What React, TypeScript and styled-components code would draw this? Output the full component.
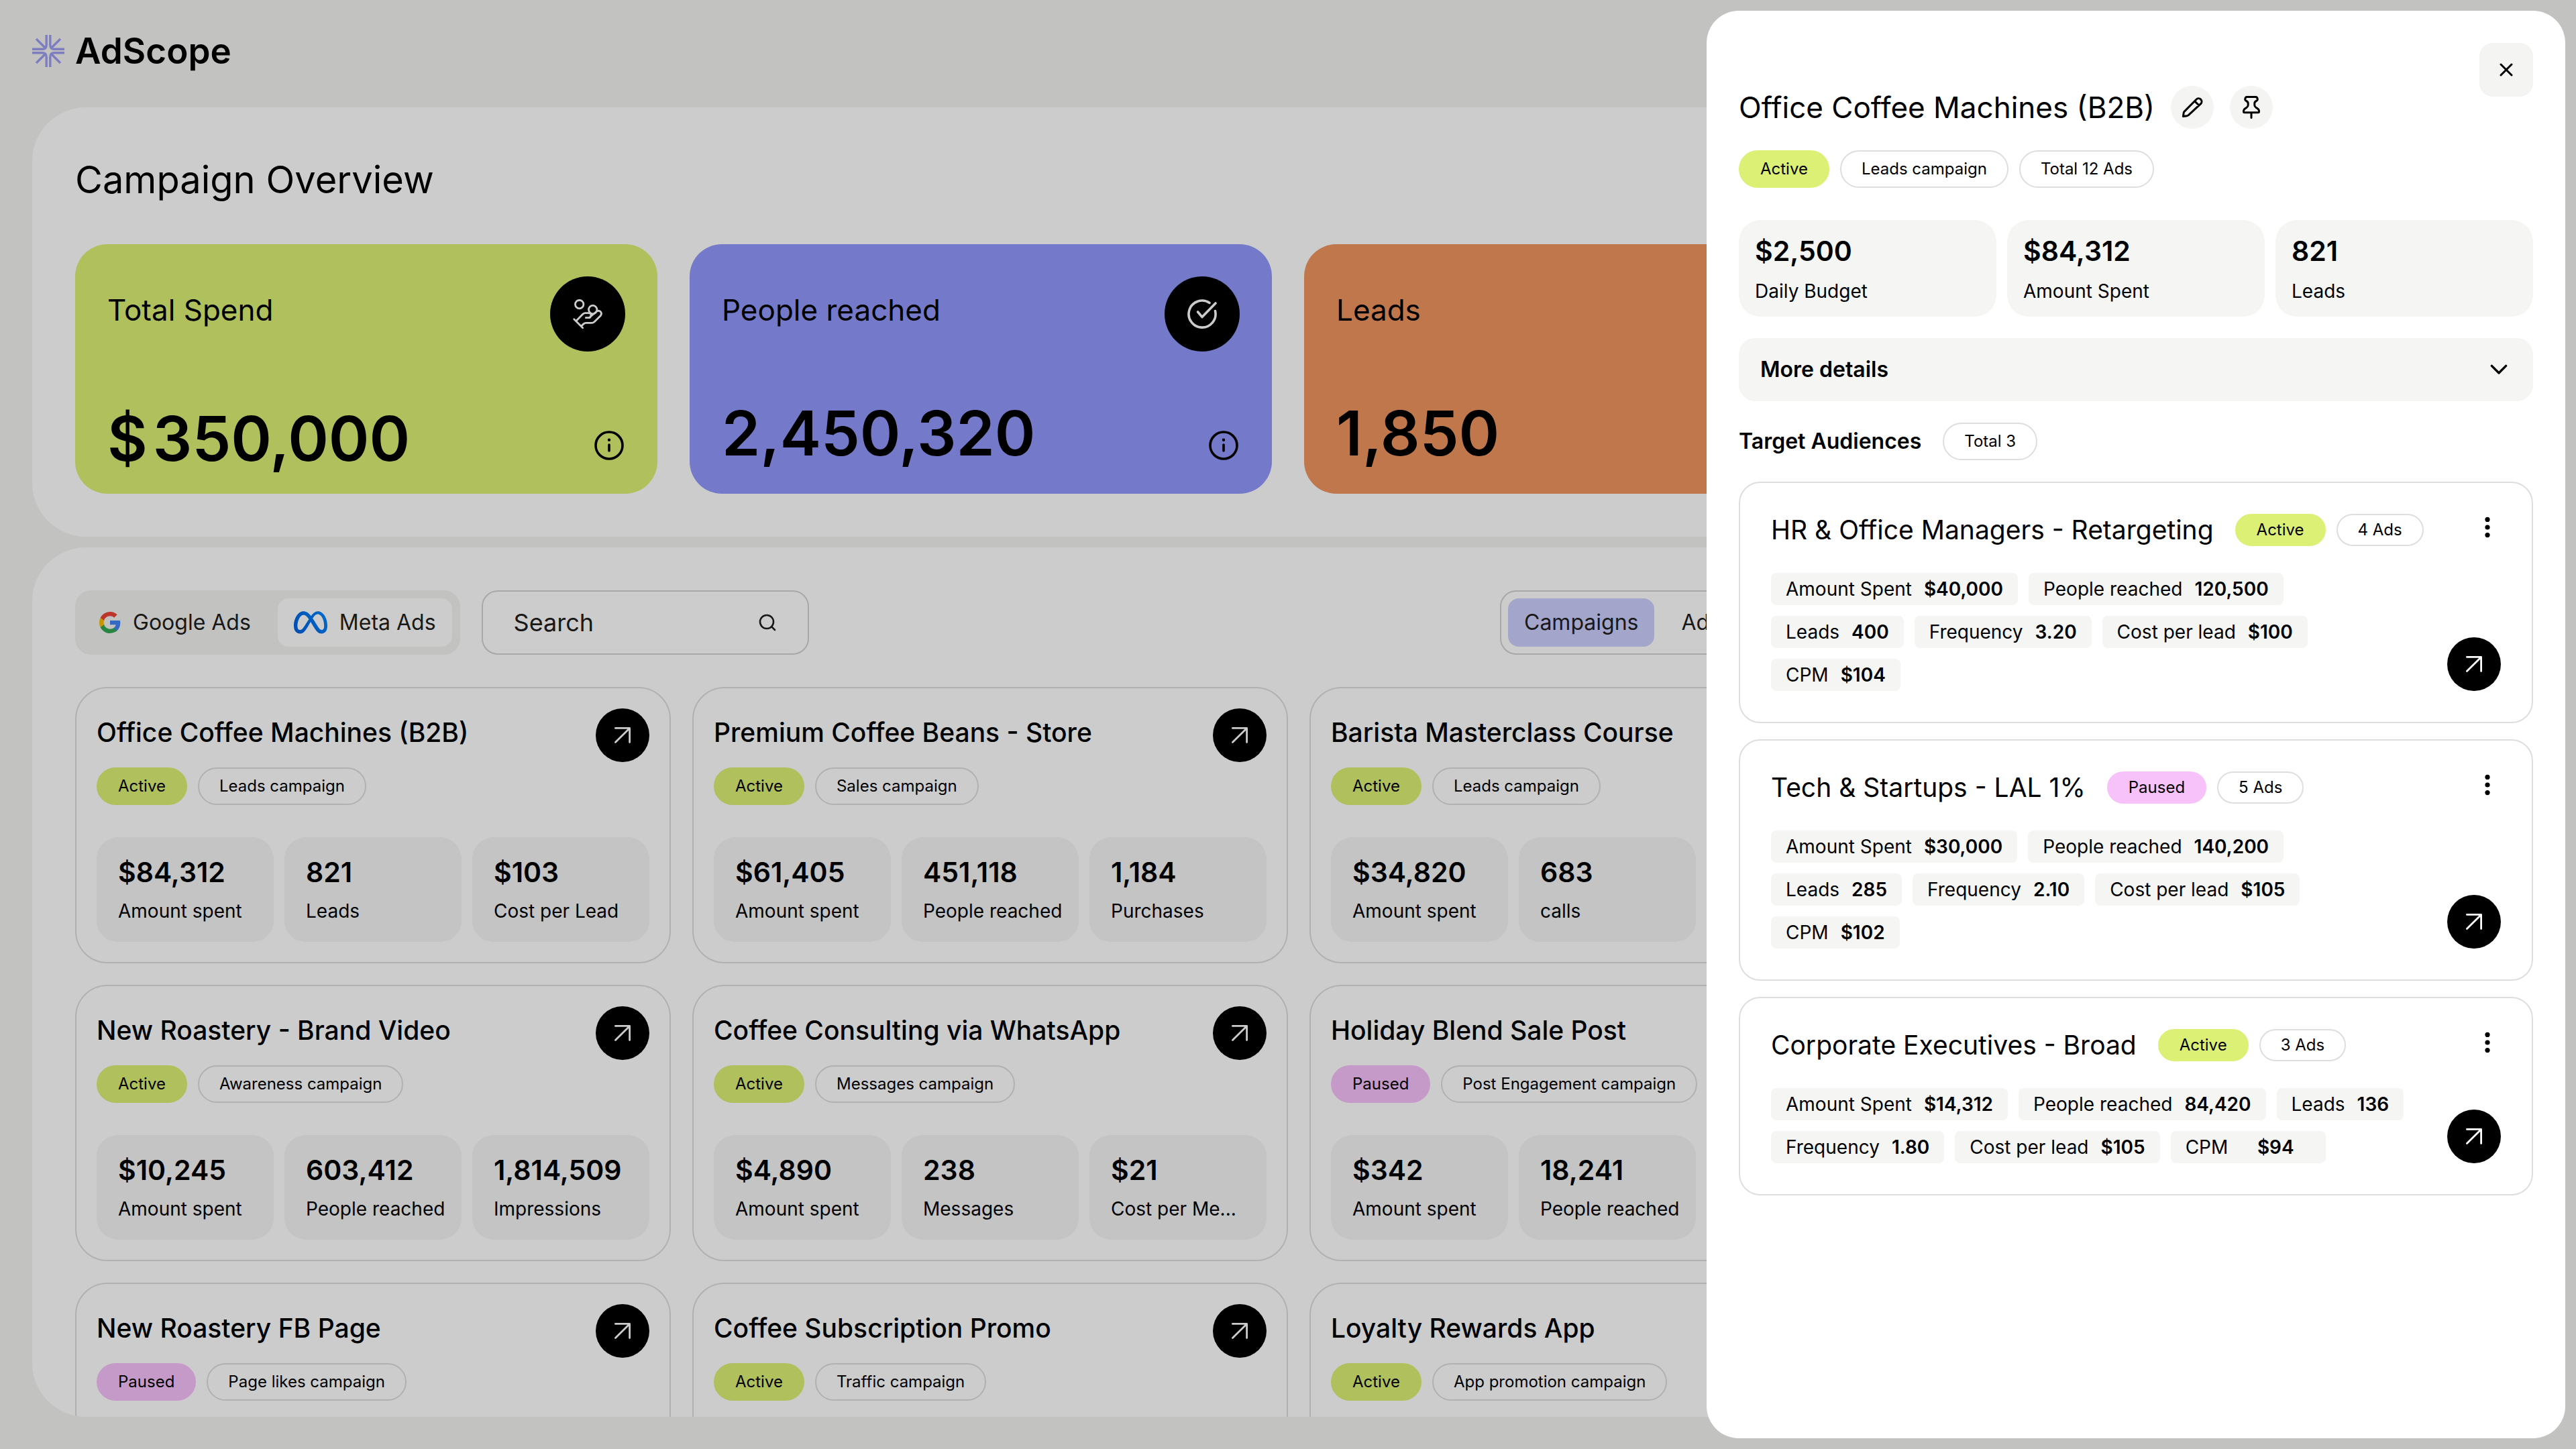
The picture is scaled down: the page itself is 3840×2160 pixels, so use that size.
import React from "react";
import styled, { createGlobalStyle } from "styled-components";
import { FaMeta } from "react-icons/fa6";
import { Users } from "lucide-react";

const GlobalStyle = createGlobalStyle`
  *, *::before, *::after { box-sizing: border-box; }
  body {
    margin: 0;
    overflow: hidden;
    background: #f3f3f0;
    color: #000;
    font-family: Inter, "Noto Sans", sans-serif;
    font-size: 28px;
    line-height: 36px;
  }
  h1, h2, h3, p, ul, dl, dt, dd { margin: 0; padding: 0; font-weight: 400; }
  ul { list-style: none; }
  button, input { font: inherit; color: inherit; }
  button { border: 0; padding: 0; cursor: pointer; }
  svg { display: block; flex: none; }
`;

/* ---------- dashboard ---------- */

const Page = styled.div`
  display: flex;
  flex-direction: column;
  gap: 16px;
  height: 100vh;
  padding: 0 48px 48px;
`;

const TopBar = styled.header`
  display: flex;
  align-items: center;
  gap: 16px;
  padding: 44px 0 36px;
`;

const Brand = styled.span`
  font-size: 53px;
  line-height: 64px;
  font-weight: 600;
`;

const Overview = styled.section`
  flex: none;
  padding: 64px;
  border-radius: 80px;
  background: #fff;
`;

const PageTitle = styled.h1`
  margin-bottom: 52px;
  font-size: 56px;
  line-height: 88px;
`;

const OverviewGrid = styled.div`
  display: grid;
  grid-template-columns: repeat(4, 1fr);
  gap: 48px;
`;

const MetricCard = styled.article<{ $tone: string }>`
  display: flex;
  justify-content: space-between;
  height: 372px;
  padding: 48px;
  border-radius: 48px;
  background: ${(p) => p.$tone};
`;

const MetricColumn = styled.div`
  display: flex;
  flex-direction: column;
  justify-content: space-between;
  align-items: flex-start;
`;

const MetricSide = styled(MetricColumn)`
  align-items: flex-end;
`;

const MetricName = styled.h2`
  padding-top: 22px;
  font-size: 44px;
  line-height: 56px;
`;

const MetricValue = styled.p<{ $money?: boolean }>`
  display: flex;
  gap: 8px;
  font-size: 92px;
  line-height: ${(p) => (p.$money ? 68 : 84)}px;
  font-weight: 600;
`;

const MetricIcon = styled.span`
  display: grid;
  place-items: center;
  width: 112px;
  height: 112px;
  border-radius: 50%;
  background: #000;
  color: #fff;
`;

const BareButton = styled.button`
  background: none;
`;

const Workspace = styled.section`
  flex: 1;
  min-height: 0;
  overflow: hidden;
  padding: 64px 32px 0 64px;
  border-radius: 80px;
  background: #fff;
`;

const Toolbar = styled.div`
  display: grid;
  grid-template-columns: auto 488px 1fr 1524px;
  gap: 32px;
  margin-bottom: 48px;
`;

const Switcher = styled.div<{ $outlined?: boolean }>`
  grid-column: ${(p) => (p.$outlined ? 4 : "auto")};
  display: flex;
  gap: 16px;
  height: 96px;
  padding: ${(p) => (p.$outlined ? 10 : 12)}px;
  border: ${(p) => (p.$outlined ? "2px solid #d3d3d3" : "0")};
  border-radius: 24px;
  background: ${(p) => (p.$outlined ? "#fff" : "#f3f3f0")};
`;

const SwitchButton = styled.button<{ $fill?: string }>`
  display: flex;
  align-items: center;
  gap: 18px;
  padding: 0 24px;
  border-radius: 16px;
  background: ${(p) => p.$fill || "transparent"};
  color: #1f1f1f;
  font-size: 32px;
  white-space: nowrap;
`;

const SearchBox = styled.label`
  display: flex;
  align-items: center;
  height: 96px;
  padding: 0 46px;
  border: 2px solid #d3d3d3;
  border-radius: 24px;
`;

const SearchInput = styled.input`
  flex: 1;
  min-width: 0;
  padding: 0;
  border: 0;
  outline: 0;
  background: none;
  font-size: 36px;
  &::placeholder { color: #1f1f1f; opacity: 1; }
`;

const CampaignGrid = styled.div`
  display: grid;
  grid-template-columns: repeat(4, 1fr);
  gap: 32px;
`;

const CampaignCard = styled.article`
  min-height: 412px;
  padding: 30px;
  border: 2px solid #dedede;
  border-radius: 48px;
  &:nth-child(3n + 1) { grid-column: 1; }
`;

const CampaignHead = styled.div`
  display: flex;
  justify-content: space-between;
  height: 88px;
`;

const CampaignName = styled.h3`
  font-size: 39px;
  line-height: 72px;
  font-weight: 500;
  white-space: nowrap;
`;

const RoundButton = styled.button`
  display: grid;
  place-items: center;
  flex: none;
  width: 80px;
  height: 80px;
  border-radius: 50%;
  background: #000;
  color: #fff;
`;

const PillRow = styled.div`
  display: flex;
  gap: 16px;
`;

const pillFill = { active: "#dcf075", paused: "#f7c1fa" };

const Pill = styled.span<{ $status?: keyof typeof pillFill; $low?: boolean }>`
  display: flex;
  align-items: center;
  height: ${(p) => (p.$low ? 48 : 56)}px;
  padding: 0 30px;
  border: 2px solid ${(p) => (p.$status ? pillFill[p.$status] : "#dedede")};
  border-radius: 28px;
  background: ${(p) => (p.$status ? pillFill[p.$status] : "transparent")};
  font-size: 24px;
  white-space: nowrap;
`;

const StatRow = styled.dl`
  display: grid;
  grid-template-columns: repeat(3, 1fr);
  gap: 16px;
  margin-top: 48px;
`;

const Stat = styled.div<{ $compact?: boolean }>`
  display: flex;
  flex-direction: column-reverse;
  gap: ${(p) => (p.$compact ? 18 : 16)}px;
  min-width: 0;
  padding: ${(p) => (p.$compact ? "22px 24px 20px" : "28px 32px")};
  border-radius: 32px;
  background: ${(p) => (p.$compact ? "#f5f5f3" : "#f5f5f5")};
  white-space: nowrap;
`;

const StatName = styled.dt`
  font-size: 28px;
  line-height: 36px;
`;

const StatValue = styled.dd`
  font-size: 41px;
  line-height: 48px;
  font-weight: 600;
`;

/* ---------- drawer ---------- */

const Backdrop = styled.div`
  position: fixed;
  inset: 0;
  background: rgba(0, 0, 0, 0.2);
`;

const Drawer = styled.aside`
  position: fixed;
  top: 16px;
  right: 16px;
  bottom: 16px;
  width: 1280px;
  padding: 48px;
  border-radius: 48px;
  background: #fff;
`;

const DrawerHead = styled.div`
  display: flex;
  justify-content: space-between;
`;

const DrawerTitleRow = styled.div`
  display: flex;
  align-items: center;
  gap: 24px;
  padding-top: 64px;
  margin-bottom: 32px;
`;

const DrawerTitle = styled.h2`
  font-size: 44px;
  line-height: 64px;
  white-space: nowrap;
`;

const SoftButton = styled.button<{ $large?: boolean }>`
  display: grid;
  place-items: center;
  width: ${(p) => (p.$large ? 80 : 64)}px;
  height: ${(p) => (p.$large ? 80 : 64)}px;
  border-radius: ${(p) => (p.$large ? "20px" : "50%")};
  background: #f4f4f3;
`;

const DetailsToggle = styled.button`
  display: flex;
  align-items: center;
  justify-content: space-between;
  width: 100%;
  height: 94px;
  margin: 32px 0;
  padding: 0 38px 0 32px;
  border-radius: 24px;
  background: #f5f5f3;
  font-size: 32px;
  font-weight: 600;
`;

const AudienceHead = styled.div`
  display: flex;
  align-items: center;
  gap: 32px;
  margin-bottom: 32px;
`;

const SectionTitle = styled.h3`
  font-size: 32px;
  line-height: 56px;
  font-weight: 600;
`;

const AudienceList = styled.ul`
  display: grid;
  gap: 24px;
`;

const AudienceCard = styled.li`
  padding: 46px;
  border: 2px solid #dedede;
  border-radius: 32px;
`;

const AudienceTop = styled.div`
  display: flex;
  gap: 32px;
  height: 48px;
  margin-bottom: 40px;
`;

const AudienceName = styled.h4`
  margin: 0;
  font-size: 39px;
  line-height: 48px;
  font-weight: 400;
  white-space: nowrap;
`;

const MenuButton = styled(BareButton)`
  display: grid;
  place-items: center;
  width: 40px;
  height: 40px;
  margin-left: auto;
`;

const AudienceBody = styled.div`
  display: flex;
  align-items: flex-end;
  gap: 48px;
`;

const Chips = styled.dl`
  flex: 1;
  display: flex;
  flex-wrap: wrap;
  gap: 16px;
`;

const Chip = styled.div`
  display: flex;
  align-items: center;
  gap: 18px;
  height: 48px;
  padding: 0 22px;
  border-radius: 8px;
  background: #f5f5f3;
`;

const ChipValue = styled.dd<{ $wide?: boolean }>`
  min-width: ${(p) => (p.$wide ? 106 : 0)}px;
  font-weight: 600;
  text-align: center;
`;

/* ---------- icons ---------- */

const LogoMark = () => (
  <svg width="48" height="48" viewBox="0 0 48 48" fill="none" stroke="#9c9ef2" strokeWidth="3.4">
    {[0, 90, 180, 270].map((a) => (
      <path key={a} transform={`rotate(${a} 24 24)`} d="M21.2 0V15Q21.2 21.2 15 21.2H0M6 6L19 19" />
    ))}
  </svg>
);

const HandCoinsIcon = () => (
  <svg width="48" height="48" viewBox="0 0 48 48" fill="none" stroke="currentColor" strokeWidth="2.8" strokeLinecap="round" strokeLinejoin="round">
    <circle cx="11.7" cy="9.7" r="6.2" />
    <circle cx="31.7" cy="17.6" r="6.2" />
    <path d="M3.7 31.7L16.7 44.7M7.3 34L16 25Q18 22.8 20.5 22.6H25.5Q29.2 22.8 29 26Q28.6 29.7 25.3 29.7H21.3M28.6 27.8L37.6 20Q40.5 18.2 43.3 20.6Q45.6 23.2 43.4 26.4L34 35.8Q32.4 37.3 30 37.4H21.5Q19.5 37.4 18.2 38.6L14.4 42.2" />
  </svg>
);

const CheckCircleIcon = () => (
  <svg width="48" height="48" viewBox="0 0 48 48" fill="none" stroke="currentColor" strokeWidth="3.6" strokeLinecap="round" strokeLinejoin="round">
    <path d="M35 7.4A20 20 0 1 0 43.5 19.6M17.6 21L24 28.6L44 8" />
  </svg>
);

const InfoIcon = () => (
  <svg width="48" height="48" viewBox="0 0 48 48" fill="none" stroke="currentColor" strokeWidth="3.6" strokeLinecap="round">
    <circle cx="24" cy="24" r="20" />
    <path d="M24 23V32" />
    <circle cx="24" cy="15.8" r="2.2" fill="currentColor" stroke="none" />
  </svg>
);

const GoogleIcon = () => (
  <svg width="32" height="32" viewBox="0 0 18 18">
    <path fill="#4285F4" d="M17.64 9.2c0-.637-.057-1.251-.164-1.84H9v3.481h4.844c-.209 1.125-.843 2.078-1.796 2.717v2.258h2.908c1.702-1.567 2.684-3.874 2.684-6.615z" />
    <path fill="#34A853" d="M9 18c2.43 0 4.467-.806 5.956-2.18l-2.908-2.259c-.806.54-1.837.86-3.048.86-2.344 0-4.328-1.584-5.036-3.711H.957v2.332C2.438 15.983 5.482 18 9 18z" />
    <path fill="#FBBC05" d="M3.964 10.71c-.18-.54-.282-1.117-.282-1.71s.102-1.17.282-1.71V4.958H.957C.347 6.173 0 7.548 0 9s.348 2.827.957 4.042l3.007-2.332z" />
    <path fill="#EA4335" d="M9 3.58c1.321 0 2.508.454 3.44 1.345l2.582-2.58C13.463.891 11.426 0 9 0 5.482 0 2.438 2.017.957 4.958L3.964 7.29C4.672 5.163 6.656 3.58 9 3.58z" />
  </svg>
);

const MetaMark = styled(FaMeta)`
  width: 50px;
  height: 40px;
  fill: url(#meta-blue);
`;

const GradientDefs = styled.svg`
  position: absolute;
  width: 0;
  height: 0;
`;

const MetaIcon = () => (
  <>
    <GradientDefs aria-hidden="true">
      <linearGradient id="meta-blue" x1="0" x2="1" y1="0.7" y2="0.3">
        <stop offset="0" stopColor="#0064e1" />
        <stop offset="1" stopColor="#0082fb" />
      </linearGradient>
    </GradientDefs>
    <MetaMark />
  </>
);

const SearchIcon = () => (
  <svg width="28" height="28" viewBox="0 0 28 28" fill="none" stroke="#1f1f1f" strokeWidth="2.6" strokeLinecap="round">
    <circle cx="13" cy="13" r="10" />
    <path d="M20.4 20.4L25 25" />
  </svg>
);

const ArrowIcon = () => (
  <svg width="26" height="26" viewBox="0 0 26 26" fill="none" stroke="currentColor" strokeWidth="2.8" strokeLinecap="round" strokeLinejoin="round">
    <path d="M2.4 2.4H23.6V23.6M23.6 2.4L2.4 23.6" />
  </svg>
);

const CloseIcon = () => (
  <svg width="20" height="20" viewBox="0 0 20 20" fill="none" stroke="currentColor" strokeWidth="3" strokeLinecap="round">
    <path d="M2 2L18 18M18 2L2 18" />
  </svg>
);

const PencilIcon = () => (
  <svg width="32" height="32" viewBox="0 0 32 32" fill="none" stroke="currentColor" strokeWidth="3" strokeLinecap="round" strokeLinejoin="round">
    <path d="M2.4 29.6L3.1 24.6Q3.3 23.2 4.3 22.1L22 4.2A4.6 4.6 0 0 1 28.7 10.7L10.6 27.4Q9.4 28.4 8 28.7ZM19.6 6.8L26 13" />
  </svg>
);

const PinIcon = () => (
  <svg width="32" height="36" viewBox="0 0 32 36" fill="none" stroke="currentColor" strokeWidth="3" strokeLinecap="round" strokeLinejoin="round">
    <path d="M9.6 2.5H22.4A3.2 3.2 0 0 1 23.6 8.5Q20.8 9.6 20.8 12V14.5Q20.8 17 23 18.3Q27.6 20.6 27.6 24Q27.6 25.7 26 25.7H6Q4.4 25.7 4.4 24Q4.4 20.6 9 18.3Q11.2 17 11.2 14.5V12Q11.2 9.6 8.4 8.5A3.2 3.2 0 0 1 9.6 2.5ZM16 25.7V33.4" />
  </svg>
);

const ChevronIcon = () => (
  <svg width="26" height="16" viewBox="0 0 26 16" fill="none" stroke="currentColor" strokeWidth="3.4" strokeLinecap="round" strokeLinejoin="round">
    <path d="M2.4 2.4L13 13L23.6 2.4" />
  </svg>
);

const DotsIcon = () => (
  <svg width="8" height="32" viewBox="0 0 8 32" fill="currentColor">
    <circle cx="4" cy="4.4" r="3.6" />
    <circle cx="4" cy="16" r="3.6" />
    <circle cx="4" cy="27.6" r="3.6" />
  </svg>
);

/* ---------- data ---------- */

type Pair = [string, string];
type Status = keyof typeof pillFill;
const statusText: Record<Status, string> = { active: "Active", paused: "Paused" };

const campaigns: { name: string; status: Status; kind: string; stats?: Pair[] }[] = [
  { name: "Office Coffee Machines (B2B)", status: "active", kind: "Leads campaign", stats: [["Amount spent", "$84,312"], ["Leads", "821"], ["Cost per Lead", "$103"]] },
  { name: "Premium Coffee Beans - Store", status: "active", kind: "Sales campaign", stats: [["Amount spent", "$61,405"], ["People reached", "451,118"], ["Purchases", "1,184"]] },
  { name: "Barista Masterclass Course", status: "active", kind: "Leads campaign", stats: [["Amount spent", "$34,820"], ["calls", "683"]] },
  { name: "New Roastery - Brand Video", status: "active", kind: "Awareness campaign", stats: [["Amount spent", "$10,245"], ["People reached", "603,412"], ["Impressions", "1,814,509"]] },
  { name: "Coffee Consulting via WhatsApp", status: "active", kind: "Messages campaign", stats: [["Amount spent", "$4,890"], ["Messages", "238"], ["Cost per Me...", "$21"]] },
  { name: "Holiday Blend Sale Post", status: "paused", kind: "Post Engagement campaign", stats: [["Amount spent", "$342"], ["People reached", "18,241"]] },
  { name: "New Roastery FB Page", status: "paused", kind: "Page likes campaign" },
  { name: "Coffee Subscription Promo", status: "active", kind: "Traffic campaign" },
  { name: "Loyalty Rewards App", status: "active", kind: "App promotion campaign" },
];

const audiences: { name: string; status: Status; ads: string; chips: Pair[] }[] = [
  { name: "HR & Office Managers - Retargeting", status: "active", ads: "4 Ads", chips: [["Amount Spent", "$40,000"], ["People reached", "120,500"], ["Leads", "400"], ["Frequency", "3.20"], ["Cost per lead", "$100"], ["CPM", "$104"]] },
  { name: "Tech & Startups - LAL 1%", status: "paused", ads: "5 Ads", chips: [["Amount Spent", "$30,000"], ["People reached", "140,200"], ["Leads", "285"], ["Frequency", "2.10"], ["Cost per lead", "$105"], ["CPM", "$102"]] },
  { name: "Corporate Executives - Broad", status: "active", ads: "3 Ads", chips: [["Amount Spent", "$14,312"], ["People reached", "84,420"], ["Leads", "136"], ["Frequency", "1.80"], ["Cost per lead", "$105"], ["CPM", "$94"]] },
];

const metrics = [
  { name: "Total Spend", value: "350,000", money: true, tone: "#dcf075", icon: <HandCoinsIcon /> },
  { name: "People reached", value: "2,450,320", money: false, tone: "#9398fc", icon: <CheckCircleIcon /> },
  { name: "Leads", value: "1,850", money: false, tone: "#f19560", icon: <Users size={48} strokeWidth={2} /> },
];

const Stats = ({ items, compact }: { items: Pair[]; compact?: boolean }) => (
  <StatRow>
    {items.map(([name, value]) => (
      <Stat key={name} $compact={compact}>
        <StatName>{name}</StatName>
        <StatValue>{value}</StatValue>
      </Stat>
    ))}
  </StatRow>
);

export default function App() {
  return (
    <>
      <GlobalStyle />
      <Page>
        <TopBar>
          <LogoMark />
          <Brand>AdScope</Brand>
        </TopBar>

        <Overview>
          <PageTitle>Campaign Overview</PageTitle>
          <OverviewGrid>
            {metrics.map((m) => (
              <MetricCard key={m.name} $tone={m.tone}>
                <MetricColumn>
                  <MetricName>{m.name}</MetricName>
                  <MetricValue $money={m.money}>
                    {m.money && <span>$</span>}
                    <span>{m.value}</span>
                  </MetricValue>
                </MetricColumn>
                <MetricSide>
                  <MetricIcon>{m.icon}</MetricIcon>
                  <BareButton aria-label={`About ${m.name}`}><InfoIcon /></BareButton>
                </MetricSide>
              </MetricCard>
            ))}
          </OverviewGrid>
        </Overview>

        <Workspace>
          <Toolbar>
            <Switcher>
              <SwitchButton aria-pressed={false}><GoogleIcon />Google Ads</SwitchButton>
              <SwitchButton aria-pressed $fill="#fff"><MetaIcon />Meta Ads</SwitchButton>
            </Switcher>
            <SearchBox>
              <SearchInput type="text" placeholder="Search" aria-label="Search campaigns" />
              <SearchIcon />
            </SearchBox>
            <Switcher $outlined>
              <SwitchButton aria-pressed $fill="#cccffd">Campaigns</SwitchButton>
              <SwitchButton aria-pressed={false}>Ad sets</SwitchButton>
            </Switcher>
          </Toolbar>

          <CampaignGrid>
            {campaigns.map((c) => (
              <CampaignCard key={c.name}>
                <CampaignHead>
                  <CampaignName>{c.name}</CampaignName>
                  <RoundButton aria-label={`Open ${c.name}`}><ArrowIcon /></RoundButton>
                </CampaignHead>
                <PillRow>
                  <Pill $status={c.status}>{statusText[c.status]}</Pill>
                  <Pill>{c.kind}</Pill>
                </PillRow>
                {c.stats && <Stats items={c.stats} />}
              </CampaignCard>
            ))}
          </CampaignGrid>
        </Workspace>
      </Page>

      <Backdrop />

      <Drawer aria-label="Campaign details">
        <DrawerHead>
          <div>
            <DrawerTitleRow>
              <DrawerTitle>Office Coffee Machines (B2B)</DrawerTitle>
              <SoftButton aria-label="Rename"><PencilIcon /></SoftButton>
              <SoftButton aria-label="Pin"><PinIcon /></SoftButton>
            </DrawerTitleRow>
            <PillRow>
              <Pill $status="active">Active</Pill>
              <Pill>Leads campaign</Pill>
              <Pill>Total 12 Ads</Pill>
            </PillRow>
          </div>
          <SoftButton $large aria-label="Close"><CloseIcon /></SoftButton>
        </DrawerHead>

        <Stats compact items={[["Daily Budget", "$2,500"], ["Amount Spent", "$84,312"], ["Leads", "821"]]} />

        <DetailsToggle aria-expanded={false}>More details<ChevronIcon /></DetailsToggle>

        <AudienceHead>
          <SectionTitle>Target Audiences</SectionTitle>
          <Pill>Total 3</Pill>
        </AudienceHead>

        <AudienceList>
          {audiences.map((a) => (
            <AudienceCard key={a.name}>
              <AudienceTop>
                <AudienceName>{a.name}</AudienceName>
                <PillRow>
                  <Pill $low $status={a.status}>{statusText[a.status]}</Pill>
                  <Pill $low>{a.ads}</Pill>
                </PillRow>
                <MenuButton aria-label={`Options for ${a.name}`}><DotsIcon /></MenuButton>
              </AudienceTop>
              <AudienceBody>
                <Chips>
                  {a.chips.map(([name, value]) => (
                    <Chip key={name}>
                      <dt>{name}</dt>
                      <ChipValue $wide={value === "$94"}>{value}</ChipValue>
                    </Chip>
                  ))}
                </Chips>
                <RoundButton aria-label={`Open ${a.name}`}><ArrowIcon /></RoundButton>
              </AudienceBody>
            </AudienceCard>
          ))}
        </AudienceList>
      </Drawer>
    </>
  );
}
